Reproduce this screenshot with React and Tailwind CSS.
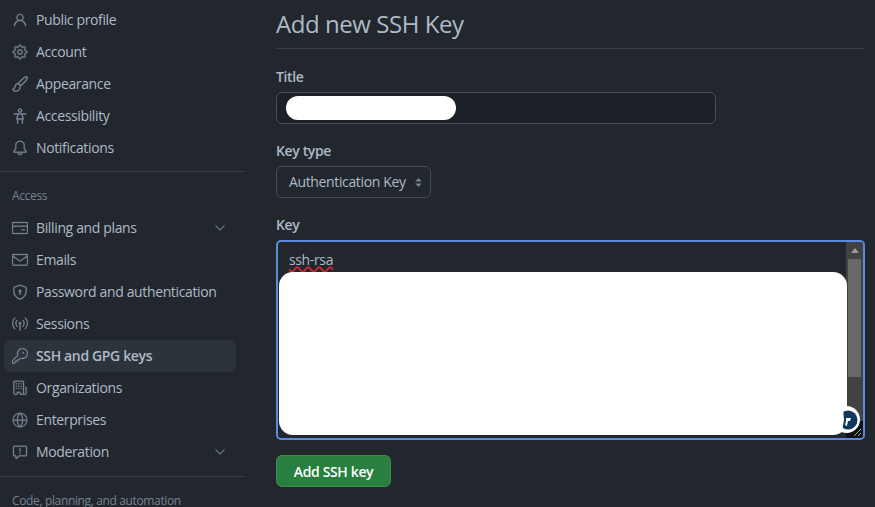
import React from "react";
import {
  GoPerson, GoGear, GoBell, GoCreditCard, GoMail,
  GoShieldLock, GoBroadcast, GoKey, GoOrganization, GoGlobe, GoReport, GoChevronDown,
} from "react-icons/go";

function BrushIcon({ className }) {
  return (
    <svg viewBox="0 0 16 16" fill="none" stroke="currentColor" strokeWidth="1.4" strokeLinejoin="round" className={className}>
      <path d="M15 1c-.9-.6-3 .6-5 2.400C8.400 4.900 7 6.400 6.200 7.600c.9.3 1.800 1.100 2.200 2.200C9.700 9 11.300 7.500 12.700 6 14.500 4 15.700 2 15 1z" />
      <path d="M6.200 7.600C4.300 7.800 3.300 9 3.100 10.500c-.1 1-.5 1.900-2.100 2.700.2 1.300 1.300 2 2.600 2 2.700 0 4.800-2.200 4.800-5.400" />
    </svg>
  );
}

function AccessibilityIcon({ className }) {
  return (
    <svg viewBox="0 0 16 16" fill="none" stroke="currentColor" strokeWidth="1.4" strokeLinecap="round" strokeLinejoin="round" className={className}>
      <circle cx="8" cy="2.600" r="1.700" />
      <path d="M2 6h12" />
      <path d="M6 6.200L4.800 11h6.400L10 6.200" />
      <path d="M5.600 11v4.200M10.400 11v4.200" />
    </svg>
  );
}

const topItems = [
  { label: "Public profile", icon: GoPerson },
  { label: "Account", icon: GoGear },
  { label: "Appearance", icon: BrushIcon, custom: true },
  { label: "Accessibility", icon: AccessibilityIcon, custom: true },
  { label: "Notifications", icon: GoBell },
];

const accessItems = [
  { label: "Billing and plans", icon: GoCreditCard, chevron: true },
  { label: "Emails", icon: GoMail },
  { label: "Password and authentication", icon: GoShieldLock },
  { label: "Sessions", icon: GoBroadcast },
  { label: "SSH and GPG keys", icon: GoKey, active: true },
  { label: "Organizations", icon: GoOrganization },
  { label: "Enterprises", icon: GoGlobe },
  { label: "Moderation", icon: GoReport, chevron: true },
];

function NavItem({ item }) {
  const Icon = item.icon;
  return (
    <div className={`flex h-8 items-center rounded-md px-2 ${item.active ? "bg-[#2d333b] font-semibold" : ""}`}>
      <Icon className={`h-4 w-4 shrink-0 text-[#768390] ${item.custom ? "" : "stroke-current stroke-[0.5]"}`} />
      <span className="ml-2 flex-1 whitespace-nowrap pb-[2px]">{item.label}</span>
      {item.chevron && <GoChevronDown className="h-4 w-4 text-[#768390]" />}
    </div>
  );
}

export default function App() {
  return (
    <div className="flex h-[507px] w-[875px] overflow-hidden bg-[#22272e] text-[14px] tracking-[-0.36px] text-[#adbac7] [font-family:'Open_Sans','Noto_Sans',sans-serif]">
      <aside className="w-[244px] shrink-0 pt-1">
        <div className="pl-1 pr-2">
          {topItems.map((item) => (
            <NavItem key={item.label} item={item} />
          ))}
        </div>
        <div className="mt-[7px] border-t border-[#373e47]" />
        <div className="flex h-[40px] items-center pl-3 pt-[8px] text-[12px] font-normal text-[#768390]">Access</div>
        <div className="pl-1 pr-2">
          {accessItems.map((item) => (
            <NavItem key={item.label} item={item} />
          ))}
        </div>
        <div className="mt-2 border-t border-[#373e47]" />
        <div className="whitespace-nowrap pl-3 pt-[15px] text-[12px] font-normal text-[#768390]">Code, planning, and automation</div>
      </aside>

      <main className="ml-8 w-[589px] shrink-0">
        <h1 className="flex h-[49px] items-center border-b border-[#373e47] text-[24px] font-normal tracking-[-0.45px]">Add new SSH Key</h1>

        <label className="mt-[18px] block h-5 font-semibold leading-5">Title</label>
        <div className="mt-[5px] flex h-8 w-[440px] items-center rounded-md border border-[#444c56] bg-[#1c2128] pl-[9px]">
          <div className="h-6 w-[170px] rounded-full bg-white" />
        </div>

        <label className="mt-[17px] block h-5 font-semibold leading-5">Key type</label>
        <div className="mt-[5px] flex h-8 w-[155px] items-center justify-between rounded-md border border-[#444c56] pl-3 pr-[7px]">
          <span className="whitespace-nowrap pb-[2px]">Authentication Key</span>
          <svg viewBox="0 0 8 12" className="h-[11px] w-[9px] fill-[#768390]">
            <path d="M4 1l3.500 4h-7zM4 11L.5 7h7z" />
          </svg>
        </div>

        <label className="mt-[17px] block h-5 font-semibold leading-5">Key</label>
        <div className="relative mt-[5px] h-[200px] w-full overflow-hidden rounded-[5px] border-2 border-[#5b8ae0] bg-[#22272e]">
          <div className="pl-[11px] pt-[8px] leading-5">
            <span className="underline decoration-[#d1242f] decoration-wavy decoration-[1.5px] underline-offset-[1px]">ssh-rsa</span>
          </div>
          <div className="absolute right-0 top-0 flex h-full w-[17px] flex-col bg-[#424242]">
            <div className="flex h-[17px] items-center justify-center">
              <div className="h-0 w-0 border-x-[4px] border-b-[5px] border-x-transparent border-b-[#9a9a9a]" />
            </div>
            <div className="mx-[2px] h-[118px] bg-[#686868]" />
            <div className="flex-1" />
            <div className="relative h-[17px] bg-[#0f1114]">
              <svg viewBox="0 0 17 17" className="absolute inset-0 h-[17px] w-[17px] stroke-[#a0a0a0]">
                <path d="M15 8L8 15M15 12l-3 3" />
              </svg>
            </div>
          </div>
          <div className="absolute left-[1px] top-[30px] h-[163px] w-[568px] rounded-[14px] bg-white" />
          <svg viewBox="0 0 27 27" className="absolute bottom-[5px] right-[3px] h-[27px] w-[27px]">
            <circle cx="13.500" cy="13.500" r="13.500" fill="#fff" />
            <circle cx="15" cy="14" r="9.500" fill="#10375e" />
            <path d="M2 2h8l1 12-2 11H2z" fill="#fff" />
            <path d="M13 12h5l-1 3h-2l-1 5-2-1 1-4z" fill="#fff" />
          </svg>
        </div>

        <button className="mt-[15px] h-8 w-[115px] rounded-md border border-[#3f8a45] bg-[#287f3f] font-semibold text-white">
          Add SSH key
        </button>
      </main>
    </div>
  );
}
